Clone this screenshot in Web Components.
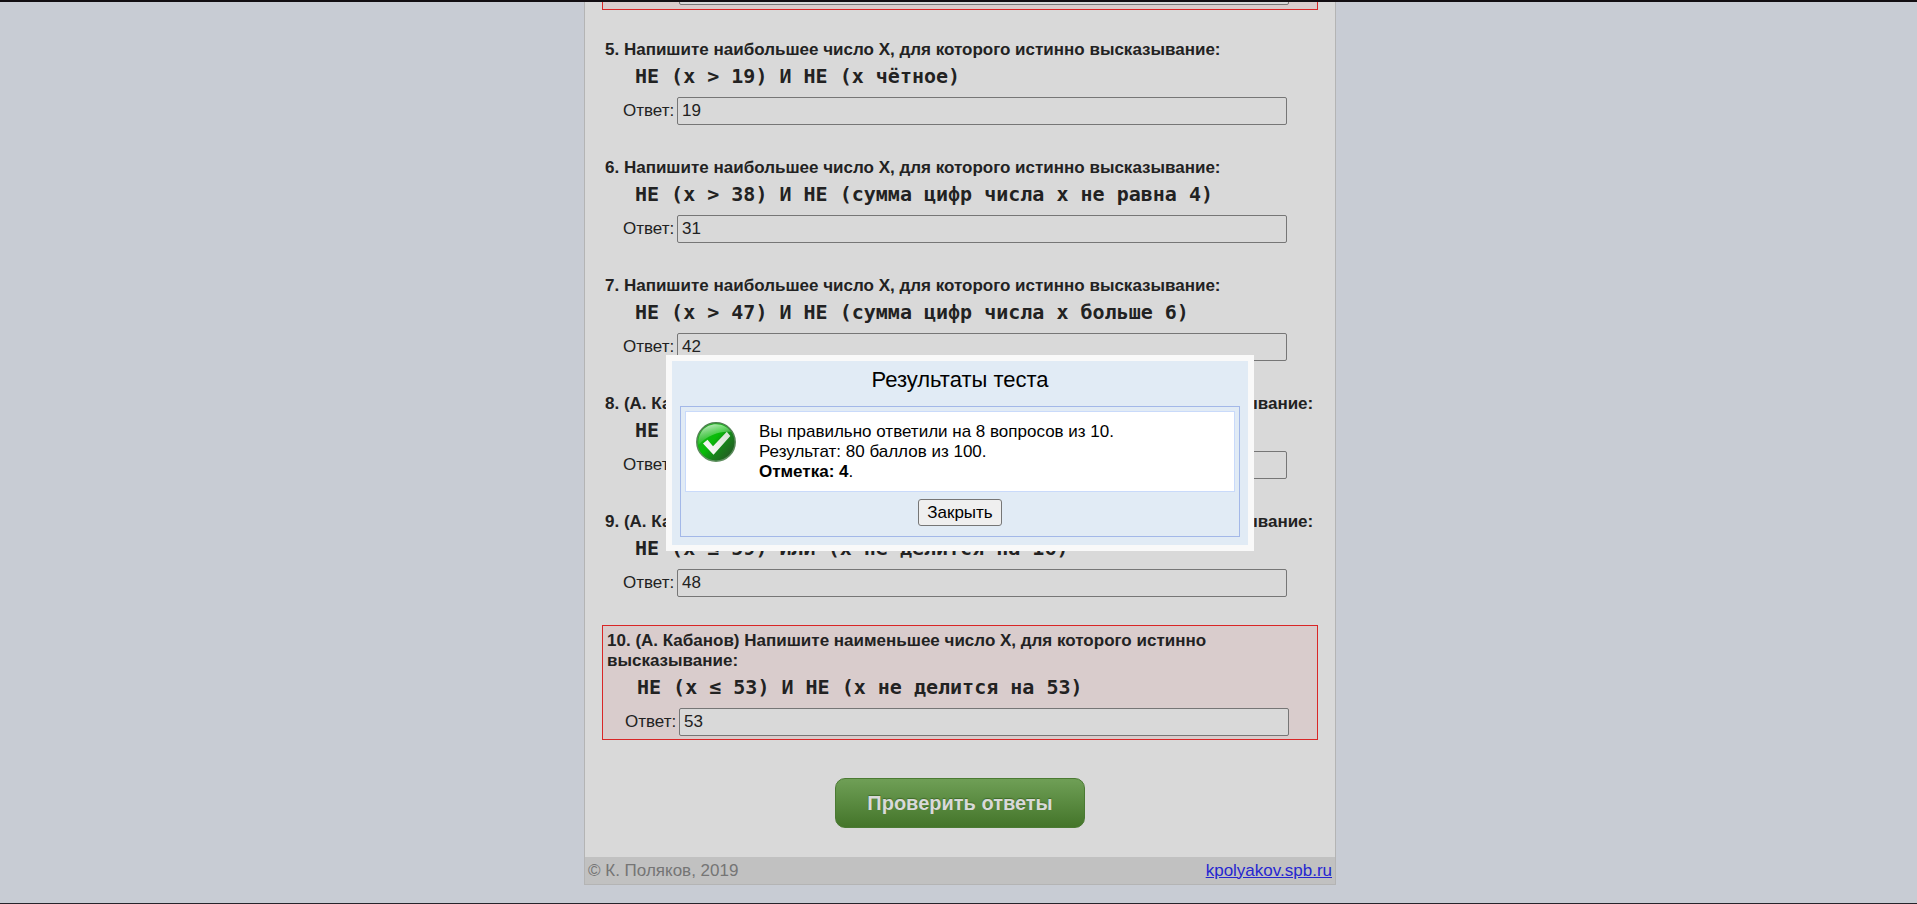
<!DOCTYPE html>
<html lang="ru">
<head>
<meta charset="utf-8">
<title>Результаты теста</title>
<style>
body{margin:0;font:17px/20px "Liberation Sans",Arial,sans-serif;color:#222;background:#c8ccd4}
</style>
</head>
<body>
<quiz-page>
  <quiz-question number="5" value="19">Напишите наибольшее число X, для которого истинно высказывание:<span slot="formula">НЕ (x &gt; 19) И НЕ (x чётное)</span></quiz-question>
  <quiz-question number="6" value="31">Напишите наибольшее число X, для которого истинно высказывание:<span slot="formula">НЕ (x &gt; 38) И НЕ (сумма цифр числа x не равна 4)</span></quiz-question>
  <quiz-question number="7" value="42">Напишите наибольшее число X, для которого истинно высказывание:<span slot="formula">НЕ (x &gt; 47) И НЕ (сумма цифр числа x больше 6)</span></quiz-question>
  <quiz-question number="8" value="">(А. Кабанов) Напишите наибольшее число X, для которого ложно высказывание:<span slot="formula">НЕ</span></quiz-question>
  <quiz-question number="9" value="48">(А. Кабанов) Напишите наибольшее число X, для которого ложно высказывание:<span slot="formula">НЕ (x ≤ 59) ИЛИ (x не делится на 16)</span></quiz-question>
  <quiz-question number="10" value="53" wrong>(А. Кабанов) Напишите наименьшее число X, для которого истинно высказывание:<span slot="formula">НЕ (x ≤ 53) И НЕ (x не делится на 53)</span></quiz-question>
  <check-button slot="actions">Проверить ответы</check-button>
  <page-footer slot="footer">© К. Поляков, 2019</page-footer>
</quiz-page>
<result-dialog heading="Результаты теста">Вы правильно ответили на 8 вопросов из 10.<br>Результат: 80 баллов из 100.<br><b>Отметка: 4</b>.</result-dialog>

<script>
const define = (name, html, setup) => {
  const t = document.createElement('template');
  t.innerHTML = html;
  customElements.define(name, class extends HTMLElement {
    constructor() {
      super();
      this.attachShadow({mode: 'open'}).append(t.content.cloneNode(true));
    }
    connectedCallback() { if (setup) setup(this, this.shadowRoot); }
  });
};

define('quiz-page', `
<style>
:host{display:flex;flex-direction:column;min-height:100vh;box-sizing:border-box;border-top:2px solid #120e12;border-bottom:1px solid #26242b;padding-left:3px}
main{width:100%;max-width:752px;box-sizing:border-box;margin:0 auto;background:#d9d9d9;border:solid #b4b4b4;border-width:0 1px 1px}
.previous{height:8px;box-sizing:border-box;overflow:hidden;margin:0 17px;border:solid #d92626;border-width:0 1px 1px;background:#d9cccc;display:flex;align-items:flex-end;padding:0 28px 4px 76px}
.previous input{flex:1;height:28px;box-sizing:border-box;border:1px solid #767676;border-radius:2px;background:#d9d9d9}
.list{display:flex;flex-direction:column;gap:24px;margin:25px 17px 38px}
</style>
<main>
  <div class="previous"><input type="text" aria-label="Ответ"></div>
  <div class="list"><slot></slot></div>
  <slot name="actions"></slot>
  <slot name="footer"></slot>
</main>`);

define('quiz-question', `
<style>
:host{display:block;padding:5px 31px 4px 3px}
:host([wrong]){border:1px solid #d92626;background:#d9cccc;padding:5px 28px 3px 4px}
.title{font-weight:bold;margin-right:-28px}
.formula{font:bold 20px/28px "DejaVu Sans Mono",monospace;margin:2px 0 7px 30px;white-space:nowrap}
.answer{display:flex;align-items:center;gap:3px;margin-left:18px}
label{width:51px}
input{flex:1;min-width:0;height:28px;box-sizing:border-box;padding:1px 4px;border:1px solid #767676;border-radius:2px;background:#d9d9d9;color:#222;font:inherit;outline:0}
</style>
<div class="title"><span id="n"></span> <slot></slot></div>
<div class="formula"><slot name="formula"></slot></div>
<div class="answer"><label for="a">Ответ:</label><input id="a" type="text"></div>`,
(host, root) => {
  root.getElementById('n').textContent = host.getAttribute('number') + '.';
  root.getElementById('a').value = host.getAttribute('value');
});

define('check-button', `
<style>
:host{display:flex;justify-content:center;margin-bottom:29px}
button{width:250px;height:50px;border:1px solid #4b7a33;border-radius:10px;background:linear-gradient(#6f9f56,#44752a);color:#d9d9d9;font:bold 20px/24px "Liberation Sans",Arial,sans-serif;text-shadow:0 -1px 1px #3f6b2a;padding:0}
</style>
<button type="button"><slot></slot></button>`);

define('page-footer', `
<style>
:host{display:flex;justify-content:space-between;align-items:center;height:27px;padding:0 3px;background:#c1c1c1;color:#757575}
a{color:#2626d0}
</style>
<span><slot></slot></span><a href="#">kpolyakov.spb.ru</a>`);

define('result-dialog', `
<style>
:host{position:fixed;inset:0;display:grid;place-items:center;padding:2px 0 0 3px;color:#000}
section{width:588px;box-sizing:border-box;border:6px solid #f9f9f9;background:#e1ebf5;padding:6px 8px 8px}
h1{margin:0 0 13px;font:22px/26px "Liberation Sans",Arial,sans-serif;text-align:center}
.frame{border:1px solid #a3b8e8;padding:4px 4px 10px}
.message{display:flex;gap:23px;border:1px solid #c9dafa;background:#fff;padding:10px 10px 9px}
svg{display:block;width:40px;height:40px;flex:none}
.buttons{display:flex;justify-content:center;margin-top:7px}
button{width:84px;height:27px;padding:0;border:1px solid #767676;border-radius:3px;background:#efefef;color:#000;font:inherit}
</style>
<section role="dialog" aria-labelledby="h">
  <h1 id="h"></h1>
  <div class="frame">
    <div class="message">
      <svg viewBox="0 0 40 40" aria-hidden="true">
        <defs>
          <linearGradient id="g" x1=".1" y1=".2" x2=".9" y2=".85"><stop offset="0" stop-color="#1fae1f"/><stop offset=".4" stop-color="#08bd08"/><stop offset=".65" stop-color="#16841a"/><stop offset="1" stop-color="#245c24"/></linearGradient>
          <linearGradient id="s" x1=".2" y1="0" x2=".6" y2="1"><stop offset="0" stop-color="#fff" stop-opacity=".75"/><stop offset="1" stop-color="#7fe87f" stop-opacity="0"/></linearGradient>
          <linearGradient id="r" x1="0" y1="0" x2="0" y2="1"><stop offset="0" stop-color="#4f7f50"/><stop offset="1" stop-color="#5f8f60"/></linearGradient>
          <linearGradient id="c" x1="0" y1="1" x2="1" y2="0"><stop offset="0" stop-color="#fff"/><stop offset="1" stop-color="#d5e0d3"/></linearGradient>
        </defs>
        <circle cx="20" cy="20" r="19.2" fill="url(#g)" stroke="url(#r)" stroke-width="1.5"/>
        <path d="M2.5 23C1.500 11 9 2.300 20 2.300C27 2.300 32 5.500 35 10C24 9 12 13 2.500 23Z" fill="url(#s)"/>
        <path d="M7 21.500L11.500 17.800L17 24.200L30.800 9.700L34.300 14L17.500 32.800Z" fill="url(#c)"/>
      </svg>
      <div><slot></slot></div>
    </div>
    <div class="buttons"><button type="button">Закрыть</button></div>
  </div>
</section>`,
(host, root) => { root.getElementById('h').textContent = host.getAttribute('heading'); });
</script>
</body>
</html>
